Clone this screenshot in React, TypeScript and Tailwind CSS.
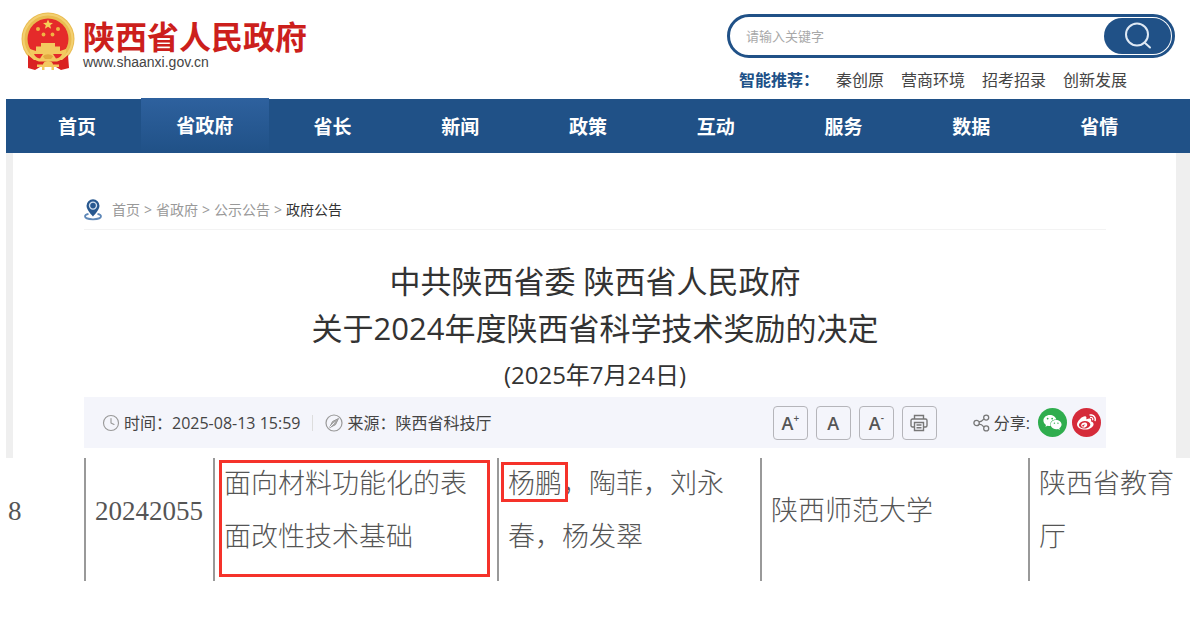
import React from "react";
import { Clock } from "lucide-react";
import { FaWeixin, FaWeibo } from "react-icons/fa";

const navItems = ["首页", "省政府", "省长", "新闻", "政策", "互动", "服务", "数据", "省情"];
const hotWords = ["秦创原", "营商环境", "招考招录", "创新发展"];
const crumbs = ["首页", "省政府", "公示公告"];

const Emblem = () => (
  <svg viewBox="0 0 54 58" className="h-[58px] w-[54px]" aria-hidden="true">
    <circle cx="27" cy="27" r="26.500" fill="#e9bb50" />
    <circle cx="27" cy="27" r="24.500" fill="none" stroke="#f3d070" strokeWidth="2" />
    <circle cx="27" cy="27" r="20.500" fill="#e52a2a" />
    <path d="M7 43l6 5h28l6-5 1 13-8 2-5-3H19l-5 3-7-2z" fill="#da2222" />
    <path d="M27 7.500l1.400 3.300 3.600.2-2.800 2.200.9 3.500-3.100-1.900-3.100 1.900.9-3.500-2.800-2.200 3.600-.2z" fill="#f6cf58" />
    <g fill="#f0b444">
      <circle cx="17" cy="17" r="2" />
      <circle cx="37" cy="17" r="2" />
      <circle cx="22.500" cy="22.500" r="1.900" />
      <circle cx="31.500" cy="22.500" r="1.900" />
    </g>
    <path d="M20 31h14v3.500h5V39H15v-4.500h5z" fill="#f3c95f" />
    <path d="M9 37l6 2h24l6-2c1 6-3 11-9 12.500H18C12 48 8 43 9 37z" fill="#f3c95f" />
    <path d="M13 42h9l-3 4.500c-3-.5-5-2-6-4.500zM41 42h-9l3 4.500c3-.5 5-2 6-4.500z" fill="#e52a2a" />
    <path d="M22 44.500c2-3 8-3 10 0l-2 2.500h-6z" fill="#e2a93f" />
    <path d="M16 52.500h6a5 3.500 0 0 1 10 0h6v2.500h-5v3h-2.500v-3h-7v3H21v-3h-5z" fill="#f3c95f" />
  </svg>
);

const SearchIcon = () => (
  <svg viewBox="0 0 28 28" className="h-7 w-7" fill="none" stroke="#dfe9f4" strokeWidth="2" aria-hidden="true">
    <circle cx="13" cy="12.500" r="11" />
    <path d="M20.500 20.500l5.500 5" strokeLinecap="round" />
  </svg>
);

const PinIcon = () => (
  <svg viewBox="0 0 18 22" className="h-[22px] w-[18px]" fill="none" aria-hidden="true">
    <path d="M4.500 14.800C2.500 15.300 1 16.200 1 17.300c0 1.700 3.600 3 8 3s8-1.300 8-3c0-1.100-1.500-2-3.500-2.500" stroke="#5f88b8" strokeWidth="1.800" />
    <path d="M9 .3a6.500 6.500 0 0 0-6.500 6.500C2.500 11 9 17.500 9 17.500s6.500-6.500 6.500-10.700A6.500 6.500 0 0 0 9 .3z" fill="#28588f" />
    <circle cx="9" cy="6.600" r="3.500" stroke="#d3e0ef" strokeWidth="1.400" />
  </svg>
);

const SourceIcon = () => (
  <svg viewBox="0 0 18 18" className="h-[18px] w-[18px]" fill="none" stroke="#999" aria-hidden="true">
    <circle cx="9" cy="9" r="8" strokeWidth="1.200" />
    <path d="M13.500 4.500l-3 6.200-6 3 3-6.200z" fill="#aaa" stroke="#999" />
    <path d="M4.500 13.500l5-5" stroke="#f4f5fb" />
  </svg>
);

const PrintIcon = () => (
  <svg viewBox="0 0 18 18" className="h-[18px] w-[18px]" fill="none" stroke="#777" strokeWidth="1.400" aria-hidden="true">
    <path d="M4.500 5V1.500h9V5" />
    <path d="M4.500 13H2.500a1.500 1.500 0 0 1-1.500-1.500v-5A1.500 1.500 0 0 1 2.500 5h13A1.500 1.500 0 0 1 17 6.500v5a1.500 1.500 0 0 1-1.500 1.500h-2" />
    <path d="M4.500 8.500h9v8h-9z" />
    <path d="M6.500 11h5M6.500 13.700h5" />
  </svg>
);

const ShareIcon = () => (
  <svg viewBox="0 0 17 18" className="h-[18px] w-[17px]" fill="none" stroke="#777" strokeWidth="1.300" aria-hidden="true">
    <circle cx="3.600" cy="9" r="2.700" />
    <circle cx="13.200" cy="3.600" r="2.500" />
    <circle cx="13.200" cy="14.400" r="2.500" />
    <path d="M6 7.800c2 0 3.500-1 4.800-2.600M6 10.200c2 0 3.500 1 4.800 2.600" />
  </svg>
);

const toolButton =
  "flex h-[34px] w-[35px] items-center justify-center rounded border border-[#b5b5ba] text-lg font-semibold leading-none text-[#555]";

const Header = () => (
  <header className="flex items-start justify-between pl-[21px] pr-[29px]">
    <a href="/" className="flex pt-3">
      <Emblem />
      <span className="flex flex-col pl-2 pt-2">
        <span className="text-[32px] font-bold leading-[34px] text-[#cc1f1c]">陕西省人民政府</span>
        <span className="font-['Liberation_Sans',sans-serif] text-sm leading-4 text-[#444]">www.shaanxi.gov.cn</span>
      </span>
    </a>
    <div className="w-[448px] pt-[14px]">
      <form className="flex h-11 rounded-full border-[3px] border-[#205187] p-px" onSubmit={(e) => e.preventDefault()}>
        <input
          type="text"
          aria-label="请输入关键字"
          placeholder="请输入关键字"
          className="min-w-0 flex-1 bg-transparent pl-[15px] pt-0.5 text-[13px] outline-none placeholder:text-[#a8a8a8]"
        />
        <button type="submit" aria-label="搜索" className="flex w-[67px] items-center justify-center rounded-full bg-[#205187]">
          <SearchIcon />
        </button>
      </form>
      <div className="flex gap-[17px] whitespace-nowrap pl-3 pt-2.5 text-base leading-6 text-[#444]">
        <span className="font-bold text-[#205187]">智能推荐：</span>
        {hotWords.map((word) => (
          <a key={word} href="#">{word}</a>
        ))}
      </div>
    </div>
  </header>
);

const Nav = () => (
  <nav className="ml-1.5 mr-3.5 mt-[7px] flex h-[54px] bg-[#205187] pl-[7px] pr-[27px]">
    {navItems.map((item, i) => (
      <a
        key={item}
        href="#"
        className={
          i === 1
            ? "-mt-px flex flex-1 items-center justify-center bg-linear-to-b from-[#2e619e] to-[#205187] pt-0.5 text-[19px] font-bold text-white"
            : "flex flex-1 items-center justify-center pt-0.5 text-[19px] font-bold text-white"
        }
      >
        {item}
      </a>
    ))}
  </nav>
);

const Article = () => (
  <main className="ml-1.5 mr-3.5 border-l-[7px] border-r-[14px] border-[#efefef] pb-2.5 pl-[71px] pr-[70px] pt-[46px]">
    <div className="flex items-center border-b border-[#f3f3f3] pb-2 text-sm leading-[22px] text-[#999]">
      <PinIcon />
      <div className="flex gap-1 pl-2.5">
        {crumbs.map((crumb) => (
          <React.Fragment key={crumb}>
            <a href="#">{crumb}</a>
            <span>&gt;</span>
          </React.Fragment>
        ))}
        <span className="text-[#333]">政府公告</span>
      </div>
    </div>

    <h1 className="pt-7 text-center text-[31px] leading-[47px] text-[#333]">
      中共陕西省委 陕西省人民政府
      <br />
      关于2024年度陕西省科学技术奖励的决定
    </h1>
    <p className="text-center text-2xl leading-[45px] text-[#333]">(2025年7月24日)</p>

    <div className="flex h-[51px] items-center whitespace-nowrap bg-[#f4f5fb] pl-[18px] pr-[5px] text-base text-[#444]">
      <Clock size={18} strokeWidth={1.5} color="#999" />
      <span className="pl-1">时间：2025-08-13 15:59</span>
      <span className="mx-3 h-4 w-px bg-[#ddd]" />
      <SourceIcon />
      <span className="pl-1">来源：陕西省科技厅</span>

      <div className="ml-auto flex gap-2">
        <button className={toolButton} aria-label="放大字体">A<sup className="text-[10px]">+</sup></button>
        <button className={toolButton} aria-label="默认字体">A</button>
        <button className={toolButton} aria-label="缩小字体">A<sup className="text-[10px]">-</sup></button>
        <button className={toolButton} aria-label="打印"><PrintIcon /></button>
      </div>
      <div className="flex items-center pl-9">
        <ShareIcon />
        <span className="pl-1 pr-2">分享:</span>
        <a href="#" aria-label="微信" className="mr-[5px] flex h-[29px] w-[29px] items-center justify-center rounded-full bg-[#2fad4e]">
          <FaWeixin size={19} color="#fff" />
        </a>
        <a href="#" aria-label="微博" className="flex h-[29px] w-[29px] items-center justify-center rounded-full bg-[#d52b3a]">
          <FaWeibo size={19} color="#fff" />
        </a>
      </div>
    </div>
  </main>
);

const AwardTable = () => (
  <table className="w-full table-fixed border-collapse font-['Liberation_Serif','Noto_Sans_CJK_SC',serif] text-[27px] font-light leading-[53px] text-[#555]">
    <colgroup>
      <col className="w-[85px]" />
      <col className="w-[129px]" />
      <col className="w-[284px]" />
      <col className="w-[263px]" />
      <col className="w-[268px]" />
      <col />
    </colgroup>
    <tbody>
      <tr className="h-[123px]">
        <td className="pb-[17px] pl-2">8</td>
        <td className="border-l-2 border-[#999] pb-[17px] pl-[9px]">20242055</td>
        <td className="relative border-l-2 border-[#999] pb-[17px] pl-[9px]">
          面向材料功能化的表
          <br />
          面改性技术基础
          <span className="absolute left-1 top-0.5 h-[117px] w-[271px] border-[3px] border-[#f5322a]" />
        </td>
        <td className="relative border-l-2 border-[#999] pb-[17px] pl-[9px]">
          杨鹏，陶菲，刘永
          <br />
          春，杨发翠
          <span className="absolute left-0.5 top-1 h-10 w-[67px] border-[3px] border-[#f5322a]" />
        </td>
        <td className="border-l-2 border-[#999] pb-[17px] pl-[9px]">陕西师范大学</td>
        <td className="border-l-2 border-[#999] pb-[17px] pl-[9px]">
          陕西省教育
          <br />厅
        </td>
      </tr>
    </tbody>
  </table>
);

const App = () => {
  return (
    <div lang="zh-CN" className="min-h-screen bg-white font-['Open_Sans','Noto_Sans_CJK_SC',sans-serif]">
      <Header />
      <Nav />
      <Article />
      <AwardTable />
    </div>
  );
};

export default App;
